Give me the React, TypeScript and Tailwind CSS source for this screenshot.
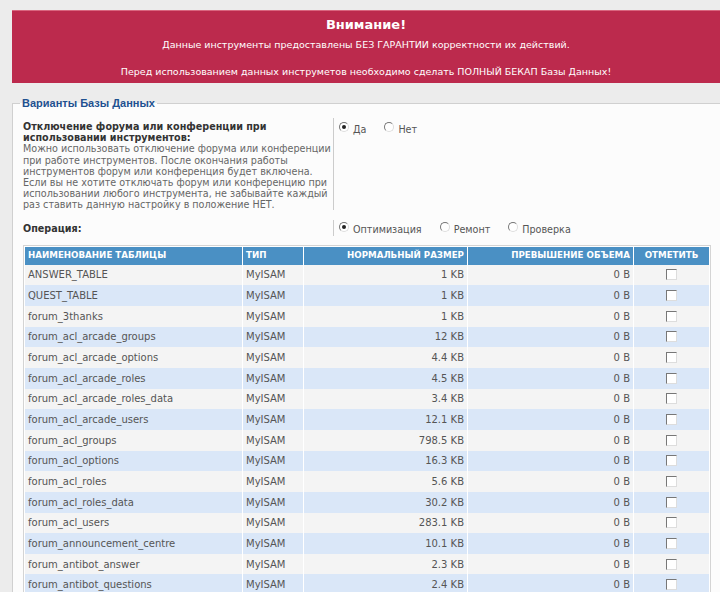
import React from 'react';

const rows: [string, string, string][] = [
  ['ANSWER_TABLE', 'MyISAM', '1 KB'],
  ['QUEST_TABLE', 'MyISAM', '1 KB'],
  ['forum_3thanks', 'MyISAM', '1 KB'],
  ['forum_acl_arcade_groups', 'MyISAM', '12 KB'],
  ['forum_acl_arcade_options', 'MyISAM', '4.4 KB'],
  ['forum_acl_arcade_roles', 'MyISAM', '4.5 KB'],
  ['forum_acl_arcade_roles_data', 'MyISAM', '3.4 KB'],
  ['forum_acl_arcade_users', 'MyISAM', '12.1 KB'],
  ['forum_acl_groups', 'MyISAM', '798.5 KB'],
  ['forum_acl_options', 'MyISAM', '16.3 KB'],
  ['forum_acl_roles', 'MyISAM', '5.6 KB'],
  ['forum_acl_roles_data', 'MyISAM', '30.2 KB'],
  ['forum_acl_users', 'MyISAM', '283.1 KB'],
  ['forum_announcement_centre', 'MyISAM', '10.1 KB'],
  ['forum_antibot_answer', 'MyISAM', '2.3 KB'],
  ['forum_antibot_questions', 'MyISAM', '2.4 KB'],
];

function Radio({ checked, label }: { checked?: boolean; label: string }) {
  return (
    <label className="flex items-start gap-[4px] text-[9.6px] text-[#555] leading-[12px]">
      <span className="mt-[1px] w-[10px] h-[10px] rounded-full border border-[#777] border-b-[#ddd] border-r-[#ddd] bg-white flex items-center justify-center">
        {checked && <span className="w-[4px] h-[4px] rounded-full bg-[#222]" />}
      </span>
      <span className="mt-[3px]">{label}</span>
    </label>
  );
}

function Check() {
  return <span className="inline-block w-[11px] h-[11px] border border-[#777] border-b-[#ddd] border-r-[#ddd] bg-white" />;
}

export default function App() {
  return (
    <div className="w-[720px] h-[592px] overflow-hidden bg-[#ececec] font-['DejaVu_Sans',Verdana,sans-serif]">
      <div className="ml-[12px] mt-[10px] h-[73px] bg-[#bc2a4d] border-t border-[#d9667f] text-white text-center">
        <div className="pt-[6px] text-[13px] font-bold leading-[16px]">Внимание!</div>
        <div className="mt-[5px] text-[9.5px] leading-[14px]">
          Данные инструменты предоставлены БЕЗ ГАРАНТИИ корректности их действий.
        </div>
        <div className="mt-[13px] text-[9.5px] leading-[14px]">
          Перед использованием данных инструметов необходимо сделать ПОЛНЫЙ БЕКАП Базы Данных!
        </div>
      </div>

      <fieldset className="ml-[12px] mt-[13px] w-[720px] border-t border-l border-[#d0d0d0] bg-[#fcfcfc] pl-[10px] pb-[20px]">
        <legend className="ml-[-3px] px-[2px] text-[11px] font-bold text-[#1f5190] leading-[14px] font-['Liberation_Sans',Arial,sans-serif]">
          Варианты Базы Данных
        </legend>

        <div className="flex mt-[8px]">
          <div className="w-[310px] pt-[3px] text-[9.6px] leading-[11.2px] text-[#666]">
            <div className="font-bold text-[#333]">
              Отключение форума или конференции при использовании инструментов:
            </div>
            <div>
              Можно использовать отключение форума или конференции при работе инструментов. После окончания работы инструментов форум или конференция будет включена. Если вы не хотите отключать форум или конференцию при использовании любого инструмента, не забывайте каждый раз ставить данную настройку в положение НЕТ.
            </div>
          </div>
          <div className="self-start border-l border-[#ccc] pl-[5px] pt-[3px] flex gap-[18px] h-[92px]">
            <Radio checked label="Да" />
            <Radio label="Нет" />
          </div>
        </div>

        <div className="flex mt-[9px]">
          <div className="w-[310px] pt-[3px] text-[9.6px] font-bold text-[#333] leading-[11.2px]">Операция:</div>
          <div className="border-l border-[#ccc] pl-[5px] pt-[1px] flex gap-[18px] h-[16px]">
            <Radio checked label="Оптимизация" />
            <Radio label="Ремонт" />
            <Radio label="Проверка" />
          </div>
        </div>

        <div className="mt-[9px] w-[688px] border border-[#d4d4d4] p-[1px] bg-white">
          <div className="grid grid-cols-[217px_60px_163px_165px_1fr] gap-x-[1px] text-[10px] text-[#555]">
            <div className="bg-[#4a90c4] h-[18px] flex items-center pl-[3px] text-white font-bold text-[8.7px]">НАИМЕНОВАНИЕ ТАБЛИЦЫ</div>
            <div className="bg-[#4a90c4] h-[18px] flex items-center pl-[3px] text-white font-bold text-[8.7px]">ТИП</div>
            <div className="bg-[#4a90c4] h-[18px] flex items-center justify-end pr-[3px] text-white font-bold text-[8.7px]">НОРМАЛЬНЫЙ РАЗМЕР</div>
            <div className="bg-[#4a90c4] h-[18px] flex items-center justify-end pr-[3px] text-white font-bold text-[8.7px]">ПРЕВЫШЕНИЕ ОБЪЕМА</div>
            <div className="bg-[#4a90c4] h-[18px] flex items-center justify-center text-white font-bold text-[8.7px]">ОТМЕТИТЬ</div>
            {rows.map(([name, type, size], i) => {
              const bg = i % 2 === 0 ? 'bg-[#f4f4f4]' : 'bg-[#dae7f8]';
              return (
                <React.Fragment key={name}>
                  <div className={`${bg} h-[20.67px] flex items-center pl-[3px]`}>{name}</div>
                  <div className={`${bg} h-[20.67px] flex items-center pl-[3px]`}>{type}</div>
                  <div className={`${bg} h-[20.67px] flex items-center justify-end pr-[3px]`}>{size}</div>
                  <div className={`${bg} h-[20.67px] flex items-center justify-end pr-[3px]`}>0 B</div>
                  <div className={`${bg} h-[20.67px] flex items-center justify-center`}><Check /></div>
                </React.Fragment>
              );
            })}
          </div>
        </div>
      </fieldset>
    </div>
  );
}
